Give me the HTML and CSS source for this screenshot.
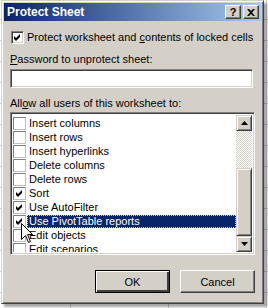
FILE: index.html
```html
<!DOCTYPE html>
<html lang="en">
<head>
    <meta charset="UTF-8">
    <title>Protect Sheet</title>
    <link rel="stylesheet" href="styles.css">
</head>
<body>

<div class="dialog">
    <div class="titlebar">
        <span class="title">Protect Sheet</span>
        <div class="caption-buttons">
            <span class="cap-btn help">?</span>
            <span class="cap-btn close">
                <svg width="8" height="7" viewBox="0 0 8 7">
                    <path d="M0 0h2l2 2 2-2h2L5 3.5 8 7H6L4 5 2 7H0l3-3.5z" fill="#000"/>
                </svg>
            </span>
        </div>
    </div>

    <div class="content">
        <div class="check-row">
            <span class="checkbox sunken checked">
                <svg width="7" height="7" viewBox="0 0 7 7"><polygon points="0,2 2,4 6,0 6,3 2,7 0,5"/></svg>
            </span>
            <span>Protect worksheet and <u>c</u>ontents of locked cells</span>
        </div>

        <label class="label pw-label" for="pw"><u>P</u>assword to unprotect sheet:</label>
        <input class="textbox" type="password" id="pw">

        <div class="label allow-label">All<u>o</u>w all users of this worksheet to:</div>

        <div class="listbox">
            <ul class="items">
                <li><span class="checkbox flat"></span><span class="item-text">Insert columns</span></li>
                <li><span class="checkbox flat"></span><span class="item-text">Insert rows</span></li>
                <li><span class="checkbox flat"></span><span class="item-text">Insert hyperlinks</span></li>
                <li><span class="checkbox flat"></span><span class="item-text">Delete columns</span></li>
                <li><span class="checkbox flat"></span><span class="item-text">Delete rows</span></li>
                <li><span class="checkbox flat checked"><svg width="7" height="7" viewBox="0 0 7 7"><polygon points="0,2 2,4 6,0 6,3 2,7 0,5"/></svg></span><span class="item-text">Sort</span></li>
                <li><span class="checkbox flat checked"><svg width="7" height="7" viewBox="0 0 7 7"><polygon points="0,2 2,4 6,0 6,3 2,7 0,5"/></svg></span><span class="item-text">Use AutoFilter</span></li>
                <li class="selected"><span class="checkbox flat checked"><svg width="7" height="7" viewBox="0 0 7 7"><polygon points="0,2 2,4 6,0 6,3 2,7 0,5"/></svg></span><span class="item-text">Use PivotTable reports</span></li>
                <li><span class="checkbox flat"></span><span class="item-text">Edit objects</span></li>
                <li><span class="checkbox flat"></span><span class="item-text">Edit scenarios</span></li>
            </ul>
            <div class="scrollbar">
                <span class="sb-btn"><svg width="7" height="4" viewBox="0 0 7 4"><polygon points="3.5,0 7,4 0,4"/></svg></span>
                <span class="sb-track"></span>
                <span class="sb-thumb"></span>
                <span class="sb-btn"><svg width="7" height="4" viewBox="0 0 7 4"><polygon points="0,0 7,0 3.5,4"/></svg></span>
            </div>
        </div>

        <div class="buttons">
            <button class="btn default">OK</button>
            <button class="btn">Cancel</button>
        </div>
    </div>
</div>

<!-- mouse pointer over the list -->
<svg class="cursor" width="13" height="21" viewBox="0 0 13 21">
    <polygon points="0.5,0.5 0.5,16.5 4.5,12.5 7.5,19.5 9.5,18.5 6.5,11.5 11.5,11.5" fill="#fff" stroke="#000"/>
</svg>

</body>
</html>
```

FILE: styles.css
```css
body {
    margin: 0;
    width: 268px;
    height: 308px;
    overflow: hidden;
    background-color: #fff;
    background-image:
        linear-gradient(to right, #d0d0d0 1px, transparent 1px),
        linear-gradient(to bottom, #d0d0d0 1px, transparent 1px);
    background-size: 98px 21px;
    background-position: 70px 19px;
    font-family: "Liberation Sans", Arial, sans-serif;
    font-size: 11px;
    color: #000;
    position: relative;
}

.dialog {
    width: 257px;
    height: 298px;
    margin-left: 1px;
    background-color: #d4d0c8;
    border: 1px solid;
    border-color: #d4d0c8 #404040 #404040 #d4d0c8;
    box-shadow: inset 1px 1px 0 #fff, inset -1px -1px 0 #808080, 3px 3px 2px rgba(0, 0, 0, 0.35);
    padding: 2px;
    display: flex;
    flex-direction: column;
}

.titlebar {
    height: 18px;
    background: linear-gradient(to right, #0a246a, #a6caf0);
    display: flex;
    align-items: center;
    justify-content: space-between;
    padding: 0 2px 0 3px;
}

.title {
    color: #fff;
    font-weight: bold;
    font-size: 12px;
}

.caption-buttons {
    display: flex;
    gap: 2px;
}

.cap-btn {
    width: 14px;
    height: 12px;
    background-color: #d4d0c8;
    border: 1px solid;
    border-color: #fff #404040 #404040 #fff;
    box-shadow: inset -1px -1px 0 #808080;
    display: flex;
    align-items: center;
    justify-content: center;
    font-weight: bold;
    font-size: 11px;
    line-height: 1;
}

.content {
    flex: 1;
    padding: 9px 5px 0 6px;
    display: flex;
    flex-direction: column;
}

.check-row {
    display: flex;
    align-items: center;
    gap: 3px;
    height: 14px;
    padding-left: 1px;
}

.checkbox {
    width: 11px;
    height: 11px;
    background-color: #fff;
    border: 1px solid;
    display: flex;
    align-items: center;
    justify-content: center;
    flex-shrink: 0;
}

.checkbox.sunken {
    border-color: #808080 #fff #fff #808080;
    box-shadow: inset 1px 1px 0 #404040, inset -1px -1px 0 #d4d0c8;
    width: 9px;
    height: 9px;
    padding: 1px;
}

.checkbox.flat {
    border-color: #808080 #c0c0c0 #c0c0c0 #808080;
}

.label {
    display: block;
    height: 14px;
    line-height: 14px;
}

.pw-label {
    margin-top: 8px;
}

.textbox {
    margin: 3px 0 0 0;
    height: 15px;
    width: 239px;
    padding: 0;
    border: 1px solid;
    border-color: #808080 #fff #fff #808080;
    box-shadow: inset 1px 1px 0 #404040, inset -1px -1px 0 #d4d0c8;
    padding: 1px;
    outline: none;
}

.allow-label {
    margin-top: 8px;
}

.listbox {
    margin-top: 2px;
    height: 137px;
    width: 239px;
    border: 1px solid;
    border-color: #808080 #fff #fff #808080;
    box-shadow: inset 1px 1px 0 #404040, inset -1px -1px 0 #d4d0c8;
    padding: 2px 2px 2px 2px;
    background-color: #fff;
    display: flex;
    overflow: hidden;
}

.items {
    list-style: none;
    margin: 0;
    padding: 1px 0 0 0;
    flex: 1;
    overflow: hidden;
}

.items li {
    height: 14px;
    display: flex;
    align-items: center;
}

.item-text {
    padding: 0 3px 0 2px;
    margin-left: 1px;
    line-height: 13px;
    white-space: nowrap;
}

.items li.selected .item-text {
    flex: 1;
    background-color: #0a246a;
    color: #fff;
    outline: 1px dotted #d4d0c8;
    outline-offset: -1px;
}

.scrollbar {
    width: 16px;
    display: flex;
    flex-direction: column;
    flex-shrink: 0;
}

.sb-btn, .sb-thumb {
    background-color: #d4d0c8;
    border: 1px solid;
    border-color: #d4d0c8 #404040 #404040 #d4d0c8;
    box-shadow: inset 1px 1px 0 #fff, inset -1px -1px 0 #808080;
}

.sb-btn {
    height: 14px;
    display: flex;
    align-items: center;
    justify-content: center;
}

.sb-track {
    height: 37px;
    background-image: repeating-conic-gradient(#d4d0c8 0 25%, #fff 0 50%);
    background-size: 2px 2px;
}

.sb-thumb {
    flex: 1;
}

.buttons {
    display: flex;
    justify-content: flex-end;
    gap: 10px;
    margin-top: 15px;
    padding-right: 1px;
}

.btn {
    width: 75px;
    height: 23px;
    background-color: #d4d0c8;
    font-family: "Liberation Sans", Arial, sans-serif;
    font-size: 11px;
    color: #000;
    padding: 0;
    border: 1px solid;
    border-color: #fff #404040 #404040 #fff;
    box-shadow: inset -1px -1px 0 #808080;
}

.btn.default {
    border: 1px solid #000;
    box-shadow: inset 1px 1px 0 #fff, inset -2px -2px 0 #404040, inset -1px -1px 0 #808080;
}

.cursor {
    position: absolute;
    left: 21px;
    top: 223px;
}
```
